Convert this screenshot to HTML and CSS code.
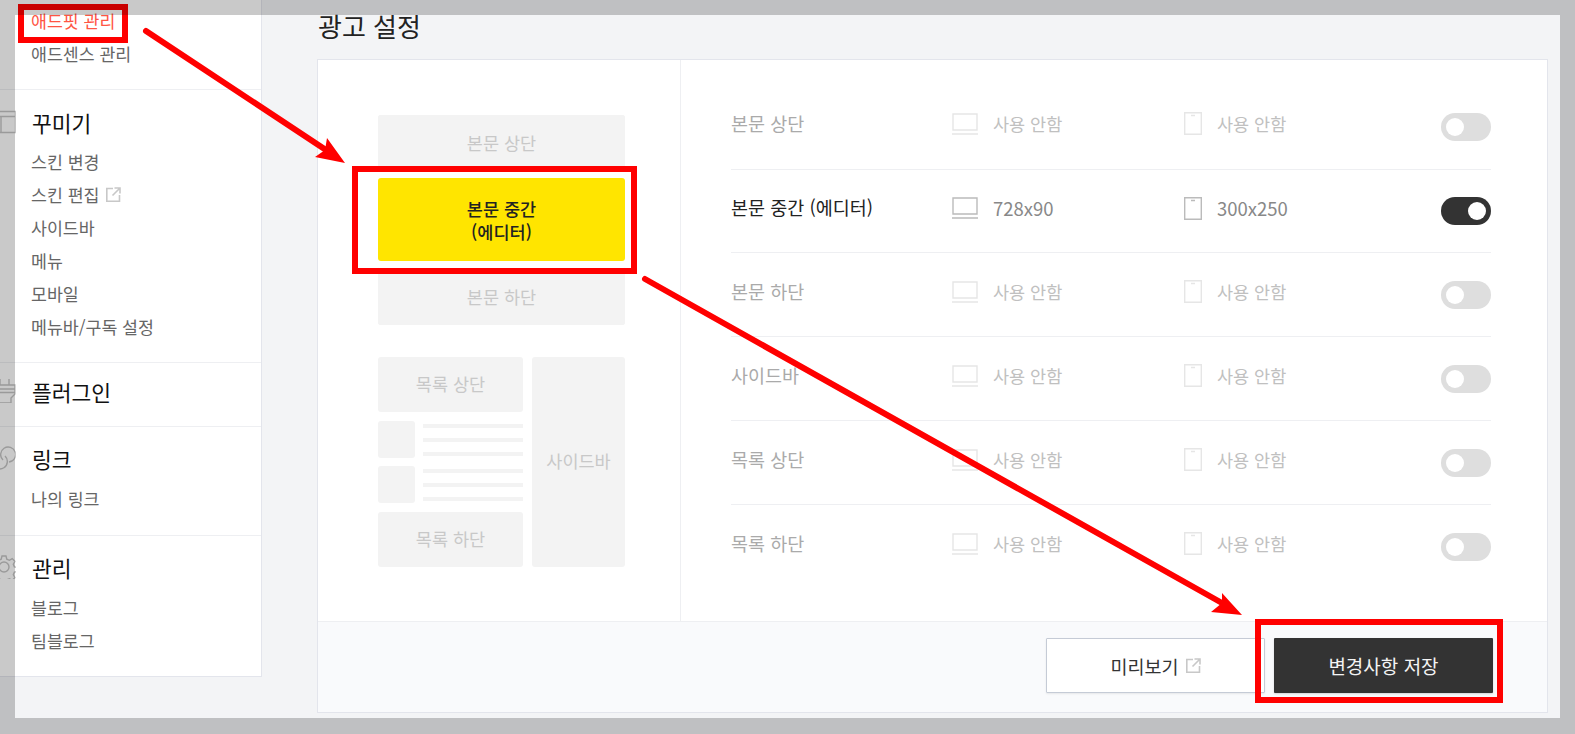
FILE: index.html
```html
<!DOCTYPE html>
<html lang="ko">
<head>
    <meta charset="UTF-8">
    <meta name="viewport" content="width=device-width, initial-scale=1.0">
    <title>광고 설정</title>
    <link rel="stylesheet" href="styles.css">
</head>
<body>

    <div class="page">

        <!-- 사이드 메뉴 -->
        <aside class="sidebar">
            <div class="menu-group first">
                <a class="menu-item active">애드핏 관리</a>
                <a class="menu-item">애드센스 관리</a>
            </div>

            <div class="menu-group skin">
                <h2 class="menu-title">
                    <svg class="menu-icon" viewBox="0 0 24 24"><path d="M0 1.500h24M0 6.500h24M0 22.500h24M23.500 1.500v21M9 6.500v16"/></svg>
                    꾸미기
                </h2>
                <a class="menu-item">스킨 변경</a>
                <a class="menu-item">스킨 편집
                    <svg class="ext-icon" viewBox="0 0 15 15"><path d="M7 1.500H.8v12.700h12.700V8M8.500 1h5.500v5.500M14 1 6.500 8.500"/></svg>
                </a>
                <a class="menu-item">사이드바</a>
                <a class="menu-item">메뉴</a>
                <a class="menu-item">모바일</a>
                <a class="menu-item">메뉴바/구독 설정</a>
            </div>

            <div class="menu-group single">
                <h2 class="menu-title">
                    <svg class="menu-icon" viewBox="0 0 24 24"><path d="M8 0v6M17 0v6M2 6h21v9l-4 4v5H6v-5l-4-4zM7 10h16M7 13.500h16"/></svg>
                    플러그인
                </h2>
            </div>

            <div class="menu-group link">
                <h2 class="menu-title">
                    <svg class="menu-icon" viewBox="0 0 24 24"><path d="M11 14a7.500 7.500 0 1 1 6 2"/><path d="M13 10a7.500 7.500 0 1 1-6-2"/></svg>
                    링크
                </h2>
                <a class="menu-item">나의 링크</a>
            </div>

            <div class="menu-group manage">
                <h2 class="menu-title">
                    <svg class="menu-icon" viewBox="0 0 24 24"><circle cx="12" cy="12" r="5"/><path d="M10 1h4l.8 3.200 2.600 1.100 2.800-1.700 2.800 2.800-1.700 2.800 1.100 2.600 3.200.8v3.800l-3.200.8-1.100 2.600 1.700 2.800-2.800 2.800-2.800-1.700-2.600 1.100-.8 3.200h-4l-.8-3.200-2.600-1.100-2.800 1.700-2.800-2.800 1.700-2.800-1.100-2.600-3.200-.8v-3.800l3.200-.8 1.100-2.600-1.700-2.800 2.800-2.800 2.800 1.700 2.600-1.100z"/></svg>
                    관리
                </h2>
                <a class="menu-item">블로그</a>
                <a class="menu-item">팀블로그</a>
            </div>
        </aside>

        <main class="content">
            <h1 class="page-title">광고 설정</h1>

            <section class="panel">
                <div class="panel-body">

                    <!-- 광고 위치 미리보기 -->
                    <div class="layout-col">
                        <div class="slot-stack">
                            <div class="slot slot-top">본문 상단</div>
                            <div class="slot slot-active">본문 중간<br>(에디터)</div>
                            <div class="slot slot-bottom">본문 하단</div>
                        </div>

                        <div class="slot-list">
                            <div class="list-main">
                                <div class="slot slot-box">목록 상단</div>
                                <div class="post">
                                    <div class="post-thumb"></div>
                                    <div class="post-lines"><span></span><span></span><span></span></div>
                                </div>
                                <div class="post">
                                    <div class="post-thumb"></div>
                                    <div class="post-lines"><span></span><span></span><span></span></div>
                                </div>
                                <div class="slot slot-box">목록 하단</div>
                            </div>
                            <div class="slot slot-side">사이드바</div>
                        </div>
                    </div>

                    <!-- 위치별 설정 -->
                    <div class="rows-col">
                        <div class="ad-row">
                            <span class="ad-name">본문 상단</span>
                            <span class="ad-size">
                                <svg class="pc-icon" viewBox="0 0 26 22"><path d="M1 1h24v16H1zM0 21h26"/></svg>사용 안함
                            </span>
                            <span class="ad-size mobile">
                                <svg class="mobile-icon" viewBox="0 0 18 23"><path d="M.7.7h16.600v21.600H.7zM7 3.500h4"/></svg>사용 안함
                            </span>
                            <span class="toggle"></span>
                        </div>
                        <div class="ad-row on">
                            <span class="ad-name">본문 중간 (에디터)</span>
                            <span class="ad-size">
                                <svg class="pc-icon" viewBox="0 0 26 22"><path d="M1 1h24v16H1zM0 21h26"/></svg>728x90
                            </span>
                            <span class="ad-size mobile">
                                <svg class="mobile-icon" viewBox="0 0 18 23"><path d="M.7.7h16.600v21.600H.7zM7 3.500h4"/></svg>300x250
                            </span>
                            <span class="toggle"></span>
                        </div>
                        <div class="ad-row">
                            <span class="ad-name">본문 하단</span>
                            <span class="ad-size">
                                <svg class="pc-icon" viewBox="0 0 26 22"><path d="M1 1h24v16H1zM0 21h26"/></svg>사용 안함
                            </span>
                            <span class="ad-size mobile">
                                <svg class="mobile-icon" viewBox="0 0 18 23"><path d="M.7.7h16.600v21.600H.7zM7 3.500h4"/></svg>사용 안함
                            </span>
                            <span class="toggle"></span>
                        </div>
                        <div class="ad-row">
                            <span class="ad-name">사이드바</span>
                            <span class="ad-size">
                                <svg class="pc-icon" viewBox="0 0 26 22"><path d="M1 1h24v16H1zM0 21h26"/></svg>사용 안함
                            </span>
                            <span class="ad-size mobile">
                                <svg class="mobile-icon" viewBox="0 0 18 23"><path d="M.7.7h16.600v21.600H.7zM7 3.500h4"/></svg>사용 안함
                            </span>
                            <span class="toggle"></span>
                        </div>
                        <div class="ad-row">
                            <span class="ad-name">목록 상단</span>
                            <span class="ad-size">
                                <svg class="pc-icon" viewBox="0 0 26 22"><path d="M1 1h24v16H1zM0 21h26"/></svg>사용 안함
                            </span>
                            <span class="ad-size mobile">
                                <svg class="mobile-icon" viewBox="0 0 18 23"><path d="M.7.7h16.600v21.600H.7zM7 3.500h4"/></svg>사용 안함
                            </span>
                            <span class="toggle"></span>
                        </div>
                        <div class="ad-row">
                            <span class="ad-name">목록 하단</span>
                            <span class="ad-size">
                                <svg class="pc-icon" viewBox="0 0 26 22"><path d="M1 1h24v16H1zM0 21h26"/></svg>사용 안함
                            </span>
                            <span class="ad-size mobile">
                                <svg class="mobile-icon" viewBox="0 0 18 23"><path d="M.7.7h16.600v21.600H.7zM7 3.500h4"/></svg>사용 안함
                            </span>
                            <span class="toggle"></span>
                        </div>
                    </div>
                </div>

                <div class="panel-foot">
                    <button class="btn btn-preview">미리보기
                        <svg class="ext-icon" viewBox="0 0 15 15"><path d="M7 1.500H.8v12.700h12.700V8M8.500 1h5.500v5.500M14 1 6.500 8.500"/></svg>
                    </button>
                    <button class="btn btn-save">변경사항 저장</button>
                </div>
            </section>
        </main>
    </div>

    <!-- 빨간 표시 (스크린샷 위에 그린 주석) -->
    <svg class="marks" viewBox="0 0 1575 734">
        <rect class="mark-box" x="21" y="7" width="104" height="33"/>
        <rect class="mark-box" x="355" y="169" width="279" height="102"/>
        <rect class="mark-box" x="1258" y="622" width="242" height="78"/>
        <line class="mark-line" x1="146" y1="31" x2="326" y2="150"/>
        <polygon class="mark-head" points="327,138 345,163 315,157 325,150"/>
        <line class="mark-line" x1="645" y1="279" x2="1222" y2="603"/>
        <polygon class="mark-head" points="1222,593 1242,615 1211,612 1222,603"/>
    </svg>

    <!-- 바깥 회색 테두리 -->
    <div class="dim-frame"></div>

</body>
</html>
```

FILE: styles.css
```css
/* Geral */
html, body {
    margin: 0;
    height: 100%;
    overflow: hidden;
}

body {
    font-family: "Noto Sans CJK KR", "Noto Sans", sans-serif;
    font-size: 17px;
    color: #333;
    background-color: #f3f4f6;
}

.page {
    display: flex;
    align-items: flex-start;
    height: 734px;
}

/* Sidebar */
.sidebar {
    flex: 0 0 261px;
    height: 676px;
    background-color: #fff;
    border-right: 1px solid #e3e5ec;
    border-bottom: 1px solid #e3e5ec;
    overflow: hidden;
}

.menu-group {
    padding: 18px 0 20px 31px;
    border-bottom: 1px solid #eeeff2;
}

.menu-group.first {
    padding-top: 4px;
    padding-bottom: 19px;
}

.menu-group.skin {
    padding-top: 17px;
    padding-bottom: 19px;
}

.menu-group.skin .menu-title {
    margin-bottom: 8px;
}

.menu-group.single {
    padding-top: 13px;
    padding-bottom: 20px;
}

.menu-group.link {
    padding-top: 16px;
}

.menu-group.link .menu-title {
    margin-bottom: 9px;
}

.menu-group.manage {
    padding-top: 16px;
    border-bottom: none;
}

.menu-group.manage .menu-title {
    margin-bottom: 9px;
}

.menu-title {
    display: flex;
    align-items: center;
    gap: 16px;
    margin: 0 0 7px -39px;
    height: 30px;
    font-size: 21.5px;
    font-weight: 400;
    color: #111;
}

.single .menu-title {
    margin-bottom: 0;
}

.menu-icon {
    width: 24px;
    height: 24px;
    fill: none;
    stroke: #c4c4c4;
    stroke-width: 1.4;
}

.menu-item {
    display: flex;
    align-items: center;
    gap: 7px;
    height: 33px;
    font-size: 17.3px;
    color: #666;
}

.menu-item.active {
    color: #ff5544;
}

.ext-icon {
    width: 15px;
    height: 15px;
    fill: none;
    stroke: #c8c8c8;
    stroke-width: 1.6;
}

/* Conteudo */
.content {
    flex: 1;
    display: flex;
    flex-direction: column;
    padding: 0 28px 0 55px;
    height: 713px;
}

.page-title {
    margin: 0;
    padding-left: 1px;
    height: 59px;
    line-height: 52px;
    font-size: 26px;
    font-weight: 400;
    color: #222;
}

.panel {
    flex: 1;
    display: flex;
    flex-direction: column;
    background-color: #fff;
    border: 1px solid #e3e5ec;
}

.panel-body {
    flex: 1;
    display: flex;
}

/* Coluna de preview */
.layout-col {
    flex: 0 0 363px;
    box-sizing: border-box;
    padding: 55px 55px 0 60px;
    border-right: 1px solid #eeeff2;
}

.slot {
    display: flex;
    align-items: center;
    justify-content: center;
    text-align: center;
    font-size: 17.5px;
    background-color: #f3f3f3;
    border-radius: 3px;
    color: #c8c8c8;
}

.slot-stack {
    display: flex;
    flex-direction: column;
    height: 210px;
    background-color: #f3f3f3;
    border-radius: 3px;
}

.slot-top {
    height: 55px;
    padding-bottom: 8px;
}

.slot-active {
    height: 83px;
    line-height: 23px;
    font-weight: 500;
    background-color: #ffe500;
    color: #222;
    box-shadow: 0 0 0 7px #fff;
    position: relative;
}

.slot-bottom {
    height: 58px;
    padding-top: 6px;
}

.slot-list {
    display: flex;
    gap: 9px;
    height: 210px;
    margin-top: 32px;
}

.list-main {
    flex: 1;
    display: flex;
    flex-direction: column;
    justify-content: space-between;
}

.slot-box {
    height: 53px;
    padding-bottom: 2px;
}

.slot-side {
    flex: 0 0 93px;
    padding-bottom: 3px;
}

.post {
    display: flex;
    gap: 8px;
    height: 37px;
}

.post-thumb {
    flex: 0 0 37px;
    background-color: #f3f3f3;
    border-radius: 3px;
}

.post-lines {
    flex: 1;
    display: flex;
    flex-direction: column;
    justify-content: space-between;
    padding: 3px 0 2px;
}

.post-lines span {
    height: 4px;
    background-color: #f3f3f3;
}

/* Linhas de configuracao */
.rows-col {
    flex: 1;
    padding: 24px 56px 0 50px;
}

.ad-row {
    display: flex;
    align-items: center;
    height: 83px;
    border-bottom: 1px solid #eeeff2;
    color: #c0c0c0;
}

.ad-row:first-child {
    height: 85px;
}

.ad-row:nth-child(2) {
    height: 82px;
}

.ad-row:last-child {
    border-bottom: none;
}

.ad-name {
    flex: 0 0 221px;
    margin-top: -8px;
    font-size: 18.5px;
    color: #aaa;
}

.ad-size {
    flex: 0 0 232px;
    display: flex;
    align-items: center;
    gap: 15px;
    margin-top: -6px;
    font-size: 17.5px;
}

.ad-size.mobile {
    flex-basis: 257px;
}

.pc-icon {
    width: 26px;
    height: 22px;
    fill: none;
    stroke: #e6e6e6;
    stroke-width: 1.4;
}

.mobile-icon {
    width: 18px;
    height: 23px;
    fill: none;
    stroke: #e6e6e6;
    stroke-width: 1.4;
}

.ad-row.on .ad-name {
    color: #222;
}

.ad-row.on .ad-size {
    font-size: 18.5px;
    color: #888;
}

.ad-row.on .pc-icon,
.ad-row.on .mobile-icon {
    stroke: #bbb;
}

/* Toggle */
.toggle {
    flex: 0 0 50px;
    height: 28px;
    border-radius: 14px;
    background-color: #dedede;
    display: flex;
    align-items: center;
    justify-content: flex-start;
    box-sizing: border-box;
    padding: 0 5px;
}

.toggle::after {
    content: '';
    width: 18px;
    height: 18px;
    border-radius: 50%;
    background-color: #fff;
}

.ad-row.on .toggle {
    background-color: #333;
    justify-content: flex-end;
}

/* Rodape e botoes */
.panel-foot {
    display: flex;
    justify-content: flex-end;
    gap: 9px;
    height: 91px;
    box-sizing: border-box;
    padding: 16px 54px 0 0;
    background-color: #f9fafc;
    border-top: 1px solid #eeeff2;
}

.btn {
    display: flex;
    align-items: center;
    justify-content: center;
    gap: 7px;
    width: 219px;
    height: 55px;
    font-family: inherit;
    font-size: 18.5px;
    border-radius: 1px;
}

.btn-preview {
    background-color: #fff;
    border: 1px solid #c5cbd6;
    color: #333;
    box-shadow: 0 1px 2px rgba(0, 0, 0, 0.08);
}

.btn-save {
    background-color: #333;
    border: none;
    color: #f4f4f4;
    font-size: 19px;
    box-shadow: 0 1px 2px rgba(0, 0, 0, 0.15);
}

/* Marcas vermelhas */
.marks {
    position: absolute;
    top: 0;
    left: 0;
    width: 1575px;
    height: 734px;
}

.mark-box {
    fill: none;
    stroke: #f00;
    stroke-width: 6;
}

.mark-line {
    stroke: #f00;
    stroke-width: 6;
    stroke-linecap: round;
}

.mark-head {
    fill: #f00;
}

/* Moldura escura */
.dim-frame {
    position: absolute;
    top: 0;
    left: 0;
    width: 1575px;
    height: 734px;
    box-sizing: border-box;
    border-style: solid;
    border-color: rgba(0, 0, 0, 0.21);
    border-width: 15px 15px 16px 15px;
}
```
